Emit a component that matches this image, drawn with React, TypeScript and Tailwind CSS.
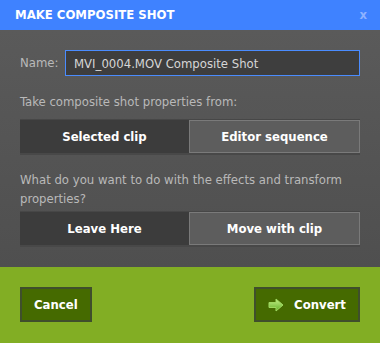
import React, { useState } from 'react';

const font = { fontFamily: '"DejaVu Sans Condensed", "DejaVu Sans", sans-serif' };

const ArrowIcon: React.FC = () => (
  <svg width="16" height="14" viewBox="0 0 16 14" className="mr-[10px]">
    <defs>
      <linearGradient id="arr" x1="0" y1="0" x2="0" y2="1">
        <stop offset="0" stopColor="#c6f08a" />
        <stop offset="1" stopColor="#5fae22" />
      </linearGradient>
    </defs>
    <polygon points="1,4.5 8,4.5 8,1 15,7 8,13 8,9.5 1,9.5" fill="url(#arr)" stroke="#9fd860" strokeWidth="1" strokeLinejoin="round" />
  </svg>
);

const Segmented: React.FC<{ left: string; right: string; value: 0 | 1; onChange: (v: 0 | 1) => void }> = ({ left, right, value, onChange }) => (
  <div className="flex h-[36px] border-t border-[#474747] border-b-[2px] border-b-[#484848] bg-[#3c3c3c]">
    {[left, right].map((label, i) => (
      <button
        key={label}
        onClick={() => onChange(i as 0 | 1)}
        className={
          'flex-1 flex items-center justify-center text-[13px] font-bold text-white ' +
          (value === i ? 'bg-[#3c3c3c]' : 'bg-[#5d5d5d] border border-[#7a7a7a]')
        }
      >
        {label}
      </button>
    ))}
  </div>
);

const App: React.FC = () => {
  const [source, setSource] = useState<0 | 1>(0);
  const [effects, setEffects] = useState<0 | 1>(0);

  return (
    <div className="w-[380px] h-[343px] flex flex-col overflow-hidden" style={font}>
      <div className="h-[30px] bg-[#3f82ff] flex items-center justify-between pl-[15px] pr-[13px]">
        <span className="text-white font-bold text-[13px]">MAKE COMPOSITE SHOT</span>
        <span className="text-[#8db2ff] font-bold text-[13px]">x</span>
      </div>

      <div className="flex-1 bg-gradient-to-b from-[#5a5a5a] to-[#4f4f4f] px-[20px] pt-[20px] text-[#b9b9b9] text-[13px]">
        <div className="flex items-center h-[26px]">
          <span className="w-[45px]">Name:</span>
          <input
            defaultValue="MVI_0004.MOV Composite Shot"
            className="flex-1 h-[26px] bg-[#3e3e3e] border border-[#4a8cff] px-[8px] text-[#d6d6d6] text-[13px] outline-none"
            style={font}
          />
        </div>

        <div className="mt-[18px] leading-[16px]">Take composite shot properties from:</div>
        <div className="mt-[9px]">
          <Segmented left="Selected clip" right="Editor sequence" value={source} onChange={setSource} />
        </div>

        <div className="mt-[15px] leading-[19px]">
          What do you want to do with the effects and transform properties?
        </div>
        <div className="mt-[3px]">
          <Segmented left="Leave Here" right="Move with clip" value={effects} onChange={setEffects} />
        </div>
      </div>

      <div className="h-[76px] bg-[#82ae24] flex justify-between items-start px-[20px] pt-[20px]">
        <button className="h-[35px] px-[12px] bg-[#456a00] border-2 border-[#3f4f2c] text-white font-bold text-[13px]">
          Cancel
        </button>
        <button className="h-[35px] w-[106px] flex items-center justify-center bg-[#456a00] border-2 border-[#3f4f2c] text-white font-bold text-[13px]">
          <ArrowIcon />
          Convert
        </button>
      </div>
    </div>
  );
};

export default App;
